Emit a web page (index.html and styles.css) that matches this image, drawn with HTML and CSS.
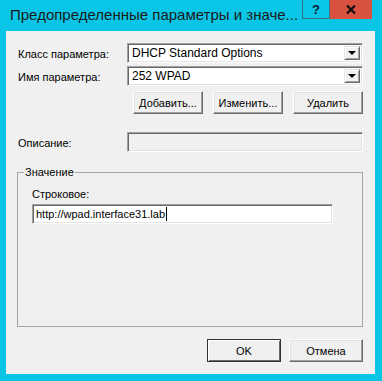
FILE: index.html
```html
<!DOCTYPE html>
<html lang="ru">
<head>
    <meta charset="UTF-8">
    <title>Предопределенные параметры и значения</title>
    <link rel="stylesheet" href="styles.css">
</head>
<body>
    <div class="window">
        <div class="titlebar">
            <span class="title">Предопределенные параметры и значе...</span>
            <div class="caption-buttons">
                <div class="cap-btn cap-help">?</div>
                <div class="cap-btn cap-close">
                    <svg width="10" height="9" viewBox="0 0 10 9">
                        <path d="M1 0.5 L9 8.5 M9 0.5 L1 8.5" stroke="#111" stroke-width="2.2" fill="none" />
                    </svg>
                </div>
            </div>
        </div>

        <div class="client">
            <div class="form">
                <label class="label">Класс параметра:</label>
                <div class="combo">
                    <span class="combo-text">DHCP Standard Options</span>
                    <span class="drop"><span class="arrow"></span></span>
                </div>

                <label class="label">Имя параметра:</label>
                <div class="combo">
                    <span class="combo-text">252 WPAD</span>
                    <span class="drop"><span class="arrow"></span></span>
                </div>

                <div class="actions">
                    <button class="btn">Добавить...</button>
                    <button class="btn">Изменить...</button>
                    <button class="btn">Удалить</button>
                </div>

                <label class="label desc-label">Описание:</label>
                <div class="field field-disabled desc-field"></div>
            </div>

            <fieldset class="group">
                <legend>Значение</legend>
                <div class="group-body">
                    <div class="sublabel">Строковое:</div>
                    <div class="field text-field">http://wpad.interface31.lab<span class="caret"></span></div>
                </div>
            </fieldset>

            <div class="footer">
                <button class="btn btn-wide btn-default">OK</button>
                <button class="btn btn-wide">Отмена</button>
            </div>
        </div>
    </div>
</body>
</html>
```

FILE: styles.css
```css
body {
    margin: 0;
    background-color: #0ac6e6;
    font-family: 'Liberation Sans', Arial, sans-serif;
    font-size: 11px;
    color: #000;
}

.window {
    width: 382px;
    height: 381px;
    display: flex;
    flex-direction: column;
}

/* title bar */
.titlebar {
    height: 31px;
    display: flex;
    align-items: flex-start;
}

.title {
    padding-left: 10px;
    font-size: 15px;
    line-height: 30px;
    color: #1a1a1a;
    white-space: nowrap;
}

.caption-buttons {
    display: flex;
    margin-left: auto;
    margin-right: 10px;
}

.cap-btn {
    height: 19px;
    display: flex;
    justify-content: center;
    align-items: center;
    box-sizing: border-box;
}

.cap-help {
    width: 28px;
    border: 1px solid #2f7385;
    border-top: none;
    font-weight: bold;
    font-size: 13px;
    color: #0c1d33;
}

.cap-close {
    width: 42px;
    background-color: #d9513f;
}

/* dialog body */
.client {
    flex: 1;
    margin: 0 7px 7px 6px;
    background-color: #f0f0f0;
    padding: 12px 12px 12px 11px;
    display: flex;
    flex-direction: column;
}

.form {
    display: grid;
    grid-template-columns: 110px 236px;
    row-gap: 3px;
}

.label {
    padding-left: 1px;
    padding-top: 1px;
    align-self: center;
}

.combo {
    height: 20px;
    box-sizing: border-box;
    background-color: #fff;
    border: 1px solid;
    border-color: #a0a0a0 #fff #fff #a0a0a0;
    box-shadow: inset 1px 1px #696969, inset -1px -1px #e3e3e3;
    display: flex;
    align-items: center;
    padding: 2px;
}

.combo-text {
    flex: 1;
    padding-left: 2px;
    font-size: 12px;
}

.drop {
    width: 16px;
    height: 14px;
    box-sizing: border-box;
    background-color: #f0f0f0;
    border: 1px solid;
    border-color: #e3e3e3 #696969 #696969 #e3e3e3;
    box-shadow: inset 1px 1px #fff, inset -1px -1px #a0a0a0;
    display: flex;
    justify-content: center;
    align-items: center;
}

.arrow {
    width: 0;
    height: 0;
    border-left: 4px solid transparent;
    border-right: 4px solid transparent;
    border-top: 4px solid #000;
}

.actions {
    grid-column: 1 / 3;
    margin-top: 2px;
    display: flex;
    justify-content: flex-end;
    gap: 10px;
}

.btn {
    width: 70px;
    height: 23px;
    padding: 0;
    font-family: inherit;
    font-size: 11px;
    color: #000;
    background-color: #f0f0f0;
    border: 1px solid;
    border-color: #fff #696969 #696969 #fff;
    box-shadow: inset -1px -1px #a0a0a0, inset 1px 1px #e3e3e3;
}

.btn-wide {
    width: 74px;
}

.btn-default {
    border-color: #333;
    box-shadow: inset 1px 1px #fff, inset -1px -1px #696969;
}

.field {
    height: 20px;
    box-sizing: border-box;
    border: 1px solid;
    border-color: #a0a0a0 #fff #fff #a0a0a0;
    box-shadow: inset 1px 1px #696969, inset -1px -1px #e3e3e3;
}

.field-disabled {
    background-color: #f0f0f0;
}

.desc-label,
.desc-field {
    margin-top: 15px;
}

/* group box */
.group {
    flex: 1;
    margin: 14px 0 0;
    padding: 0 6px;
    min-width: 0;
    border: 1px solid #a5a5a5;
}

.group legend {
    padding: 0 1px;
    line-height: 13px;
}

.group-body {
    padding-left: 8px;
}

.sublabel {
    margin-top: 9px;
    line-height: 13px;
}

.text-field {
    width: 301px;
    margin-top: 3px;
    background-color: #fff;
    padding-left: 3px;
    line-height: 18px;
    display: flex;
    align-items: center;
}

.caret {
    width: 1px;
    height: 14px;
    background-color: #000;
    margin-left: 1px;
}

.footer {
    margin-top: 12px;
    display: flex;
    justify-content: flex-end;
    gap: 8px;
}
```
